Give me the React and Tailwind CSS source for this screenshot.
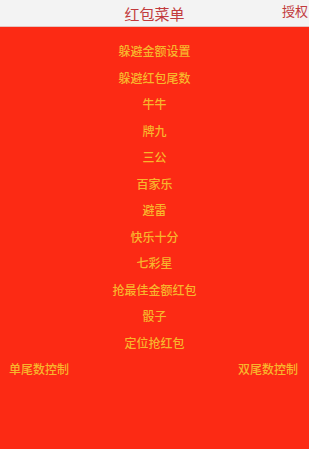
export default function App() {
  const items = [
    "躲避金额设置",
    "躲避红包尾数",
    "牛牛",
    "牌九",
    "三公",
    "百家乐",
    "避雷",
    "快乐十分",
    "七彩星",
    "抢最佳金额红包",
    "骰子",
    "定位抢红包",
  ];
  const font = { fontFamily: '"Noto Sans CJK SC", "Noto Sans", sans-serif' };
  return (
    <div className="w-[309px] h-[449px] flex flex-col bg-[#fc2a14]" style={font}>
      <div className="h-[27px] shrink-0 bg-[#f3f3f3] border-b border-[#e6c4c0] flex items-center justify-center relative">
        <span className="text-[15px] leading-none text-[#c23a3c]">红包菜单</span>
        <span className="absolute right-[1px] top-[4px] text-[13px] leading-none text-[#c23a3c]">授权</span>
      </div>
      <div className="flex flex-col pt-[11px]">
        {items.map((t) => (
          <div key={t} className="h-[26.5px] flex items-center justify-center text-[12px] font-medium leading-none text-[#f8b52c]">
            {t}
          </div>
        ))}
        <div className="h-[26.5px] flex items-center justify-between pl-[9px] pr-[11px] text-[12px] font-medium leading-none text-[#f8b52c]">
          <span>单尾数控制</span>
          <span>双尾数控制</span>
        </div>
      </div>
    </div>
  );
}
